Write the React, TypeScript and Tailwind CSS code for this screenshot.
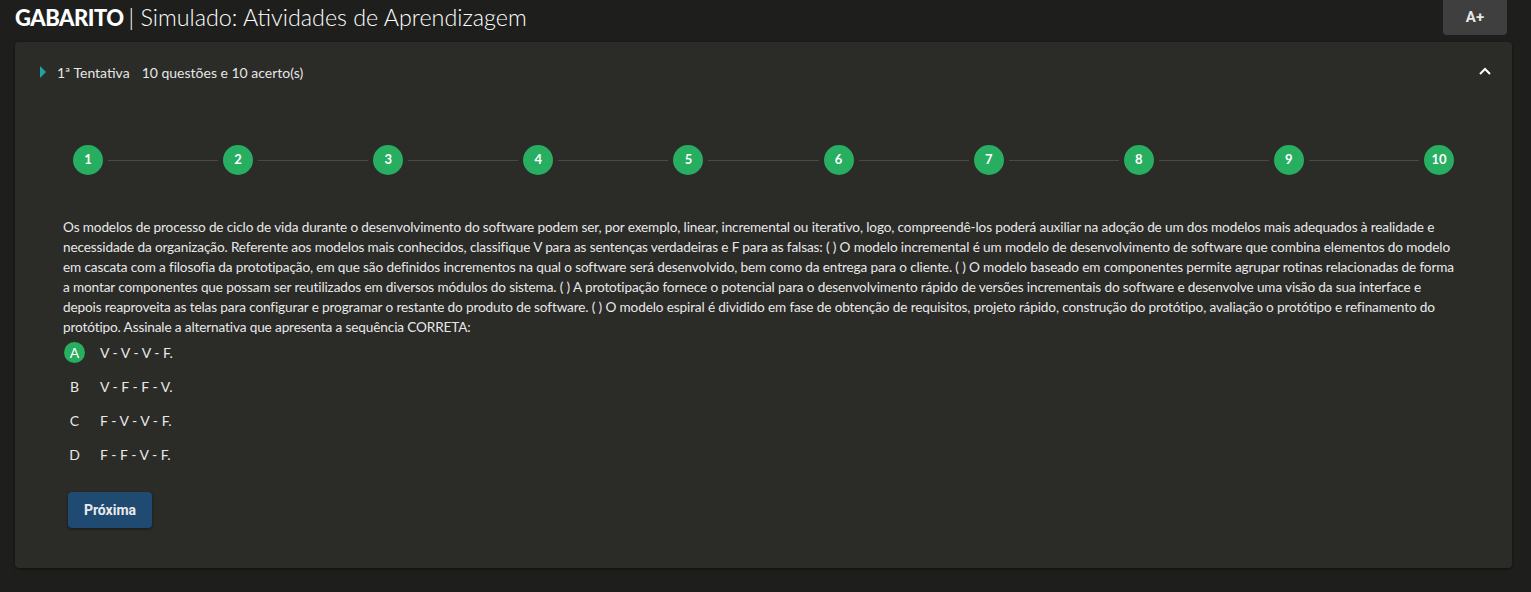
import React from "react";

const lines = [
  "Os modelos de processo de ciclo de vida durante o desenvolvimento do software podem ser, por exemplo, linear, incremental ou iterativo, logo, compreendê-los poderá auxiliar na adoção de um dos modelos mais adequados à realidade e",
  "necessidade da organização. Referente aos modelos mais conhecidos, classifique V para as sentenças verdadeiras e F para as falsas: ( ) O modelo incremental é um modelo de desenvolvimento de software que combina elementos do modelo",
  "em cascata com a filosofia da prototipação, em que são definidos incrementos na qual o software será desenvolvido, bem como da entrega para o cliente. ( ) O modelo baseado em componentes permite agrupar rotinas relacionadas de forma",
  "a montar componentes que possam ser reutilizados em diversos módulos do sistema. ( ) A prototipação fornece o potencial para o desenvolvimento rápido de versões incrementais do software e desenvolve uma visão da sua interface e",
  "depois reaproveita as telas para configurar e programar o restante do produto de software. ( ) O modelo espiral é dividido em fase de obtenção de requisitos, projeto rápido, construção do protótipo, avaliação o protótipo e refinamento do",
  "protótipo. Assinale a alternativa que apresenta a sequência CORRETA:",
];

const options = [
  { l: "A", t: "V - V - V - F.", ok: true },
  { l: "B", t: "V - F - F - V.", ok: false },
  { l: "C", t: "F - V - V - F.", ok: false },
  { l: "D", t: "F - F - V - F.", ok: false },
];

export default function App() {
  const steps = Array.from({ length: 10 }, (_, i) => i + 1);
  return (
    <div
      className="w-[1531px] h-[592px] bg-[#1e1f1d] text-white overflow-hidden"
      style={{ fontFamily: "Lato, 'Noto Sans', sans-serif" }}
    >
      <div className="flex items-start justify-between h-[42px] pl-[15px] pr-[24px]">
        <div className="flex items-center h-[36px] leading-none">
          <span className="font-black tracking-[-0.5px] text-[22px]">GABARITO</span>
          <span className="font-light ml-[5px] text-[23.3px]">| Simulado: Atividades de Aprendizagem</span>
        </div>
        <button className="w-[64px] h-[35px] bg-[#3f3f3f] rounded-b-[4px] text-[15px] font-bold text-[#e6e6e6]" style={{ fontFamily: "Roboto, sans-serif" }}>
          A+
        </button>
      </div>
      <div className="mx-[15px] mr-[19px] h-[526px] bg-[#2b2b28] rounded-[4px] shadow-[0_1px_3px_rgba(0,0,0,0.5)]">
        <div className="flex items-center justify-between h-[60px] pl-[24px] pr-[20px]">
          <div className="flex items-center text-[14px] text-[#e6e6e6]">
            <svg width="8" height="12" viewBox="0 0 8 12" className="mr-[10px]">
              <path d="M1 0 L7 6 L1 12 Z" fill="#1fa3a3" />
            </svg>
            <span>1ª Tentativa</span>
            <span className="ml-[12px]">10 questões e 10 acerto(s)</span>
          </div>
          <svg width="14" height="10" viewBox="0 0 14 10">
            <path d="M2 7 L7 2 L12 7" stroke="#fff" strokeWidth="2" fill="none" />
          </svg>
        </div>
        <div className="flex items-center pl-[58px] pr-[58px] mt-[43px]">
          {steps.map((n, i) => (
            <React.Fragment key={n}>
              <div className="w-[30px] h-[30px] rounded-full bg-[#27ae60] flex items-center justify-center text-[13px] font-bold shrink-0">
                {n}
              </div>
              {i < steps.length - 1 && <div className="flex-1 h-px bg-[#4a4a46] mx-[5px]" />}
            </React.Fragment>
          ))}
        </div>
        <div className="pl-[48px] pr-[40px] mt-[42px] text-[13.6px] tracking-[-0.13px] leading-[20px] text-[#e8e8e8] whitespace-nowrap">
          {lines.map((l, i) => (
            <div key={i}>{l}</div>
          ))}
        </div>
        <div className="pl-[49px] mt-[5px] flex flex-col gap-[14px]">
          {options.map((o) => (
            <div key={o.l} className="flex items-center h-[20px] text-[14px] text-[#e8e8e8]">
              <div
                className={
                  o.ok
                    ? "w-[21px] h-[21px] rounded-full bg-[#27ae60] flex items-center justify-center text-white"
                    : "w-[21px] h-[21px] flex items-center justify-center"
                }
              >
                {o.l}
              </div>
              <span className="ml-[15px]">{o.t}</span>
            </div>
          ))}
        </div>
        <button
          className="ml-[53px] mt-[28px] w-[84px] h-[36px] rounded-[4px] bg-[#1f4a72] text-[14px] font-bold text-[#eaeaea] shadow-[0_1px_3px_rgba(0,0,0,0.5)]"
          style={{ fontFamily: "Roboto, sans-serif" }}
        >
          Próxima
        </button>
      </div>
    </div>
  );
}
